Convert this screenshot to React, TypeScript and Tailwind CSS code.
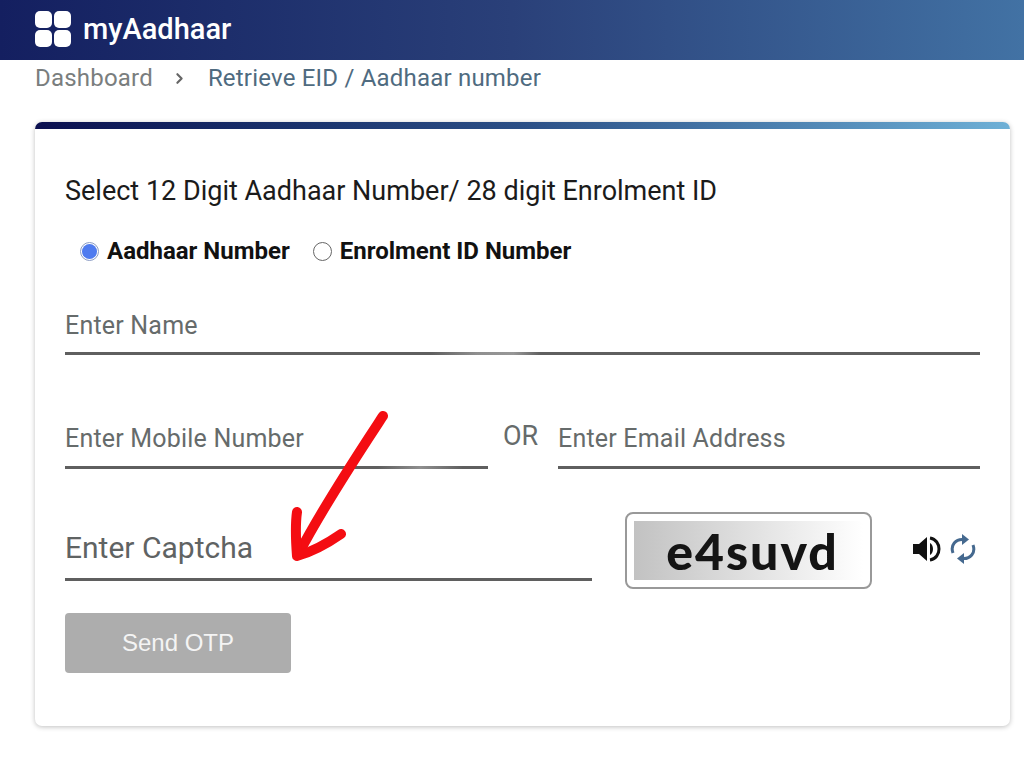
import { ChevronRight } from "lucide-react";

function Field({
  label,
  className = "",
  line = "bg-[#5f5f5f]",
  labelPad = "pb-[12px]",
}: {
  label: string;
  className?: string;
  line?: string;
  labelPad?: string;
}) {
  return (
    <div className={className}>
      <span className={`block ${labelPad} text-[25px] leading-[30px] tracking-[0.2px] text-[#666b6b]`}>{label}</span>
      <div className={`h-[3px] ${line}`} />
    </div>
  );
}

function CaptchaArrow() {
  return (
    <svg className="absolute left-[284px] top-[405px]" width="110" height="160" viewBox="0 0 110 160" fill="none">
      <path d="M99 11 C80 40 40 100 15 148" stroke="#f40d12" strokeWidth="10" strokeLinecap="round" />
      <path d="M13 107 C11 121 12 138 13 151 C28 147 44 138 57 129" stroke="#f40d12" strokeWidth="10" strokeLinecap="round" strokeLinejoin="round" />
    </svg>
  );
}

function SpeakerIcon() {
  return (
    <svg width="30" height="28" viewBox="0 0 30 28" fill="none">
      <path d="M1 9 H7 L15 2 V26 L7 19 H1 Z" fill="#111" />
      <path d="M18 8 C22 10 22 18 18 20 Z" fill="#111" />
      <path d="M18 3 C30 5 30 23 18 25" stroke="#111" strokeWidth="3" />
    </svg>
  );
}

function RefreshIcon() {
  return (
    <svg width="26" height="32" viewBox="0 0 26 32" fill="none">
      <path d="M3 20 C0 12 6 6 13 6.5" stroke="#45698f" strokeWidth="3" />
      <path d="M12 1 L19 6.5 L12 12 Z" fill="#45698f" />
      <path d="M23 12 C26 20 20 26 13 25.5" stroke="#45698f" strokeWidth="3" />
      <path d="M14 20 L7 25.5 L14 31 Z" fill="#45698f" />
    </svg>
  );
}

export default function App() {
  return (
    <div className="relative h-[757px] w-[1024px] overflow-hidden bg-white font-['Roboto',sans-serif]">
      <header className="flex h-[60px] items-center gap-[12px] bg-gradient-to-r from-[#141f60] via-[#2a4079] via-50% to-[#4272a4] pl-[35px] pb-[2px]">
        <div className="grid grid-cols-2 gap-[2px]">
          <span className="h-[17px] w-[17px] rounded-[5px] bg-white" />
          <span className="h-[17px] w-[17px] rounded-[5px] bg-white" />
          <span className="h-[17px] w-[17px] rounded-[5px] bg-white" />
          <span className="h-[17px] w-[17px] rounded-[5px] bg-white" />
        </div>
        <span className="text-[29px] font-medium leading-none text-white">myAadhaar</span>
      </header>

      <nav className="flex h-[36px] items-center pl-[35px] text-[24px] tracking-[0.2px]">
        <span className="text-[#7a7e7e]">Dashboard</span>
        <ChevronRight className="ml-[18px] mr-[20px] text-[#666]" size={17} strokeWidth={3} />
        <span className="text-[#4f6b80]">Retrieve EID / Aadhaar number</span>
      </nav>

      <main className="ml-[35px] mt-[26px] h-[604px] w-[975px] overflow-hidden rounded-[7px] bg-white shadow-[0_1px_5px_rgba(0,0,0,0.25)]">
        <div className="h-[7px] bg-gradient-to-r from-[#0b0f4f] via-[#2b4f86] to-[#6eb0d6]" />
        <div className="px-[30px] pt-[47px]">
          <p className="text-[27px] leading-[30px] text-[#1b1b1b]">Select 12 Digit Aadhaar Number/ 28 digit Enrolment ID</p>

          <div className="ml-[15px] mt-[30px] flex h-[30px] items-center text-[24px] font-bold text-[#111]">
            <span className="flex h-[19px] w-[19px] items-center justify-center rounded-full border border-[#8b9cc4] bg-white">
              <span className="h-[15px] w-[15px] rounded-full bg-[#4f7bef]" />
            </span>
            <span className="ml-[8px]">Aadhaar Number</span>
            <span className="ml-[23px] h-[19px] w-[19px] rounded-full border border-[#666]" />
            <span className="ml-[8px]">Enrolment ID Number</span>
          </div>

          <Field
            label="Enter Name"
            className="mt-[45px]"
            labelPad="pb-[11px]"
            line="bg-[linear-gradient(to_right,#5f5f5f_40%,#8f8f8f_45%,#979797_49%,#5f5f5f_52%)]"
          />

          <div className="mt-[66px] flex items-end">
            <Field
              label="Enter Mobile Number"
              className="w-[423px]"
              line="bg-[linear-gradient(to_right,#5f5f5f_74%,#8f8f8f_84%,#5f5f5f_94%)]"
            />
            <span className="ml-[15px] w-[55px] pb-[18px] text-[27px] leading-[30px] text-[#666b6b]">OR</span>
            <Field label="Enter Email Address" className="flex-1" />
          </div>

          <div className="mt-[43px] flex items-start">
            <div className="w-[527px] border-b-[3px] border-[#5f5f5f] pb-[12px] pt-[18px]">
              <span className="block text-[30px] leading-[36px] text-[#5f6363]">Enter Captcha</span>
            </div>
            <div className="ml-[33px] h-[77px] w-[247px] rounded-[8px] border-2 border-[#999] bg-white p-[7px]">
              <div className="flex h-full items-center justify-center bg-gradient-to-r from-[#c2c2c2] to-white pl-[8px]">
                <span className="font-['Lato',sans-serif] text-[50px] font-black leading-none tracking-[2px] text-[#141414]">e4suvd</span>
              </div>
            </div>
            <div className="ml-[40px] mt-[21px] flex items-center gap-[8px]">
              <SpeakerIcon />
              <RefreshIcon />
            </div>
          </div>

          <button className="mt-[24px] h-[60px] w-[226px] rounded-[4px] bg-[#adadad] font-['Liberation_Sans',sans-serif] text-[24px] text-[#f4f4f4]">
            Send OTP
          </button>
        </div>
      </main>

      <CaptchaArrow />
    </div>
  );
}
